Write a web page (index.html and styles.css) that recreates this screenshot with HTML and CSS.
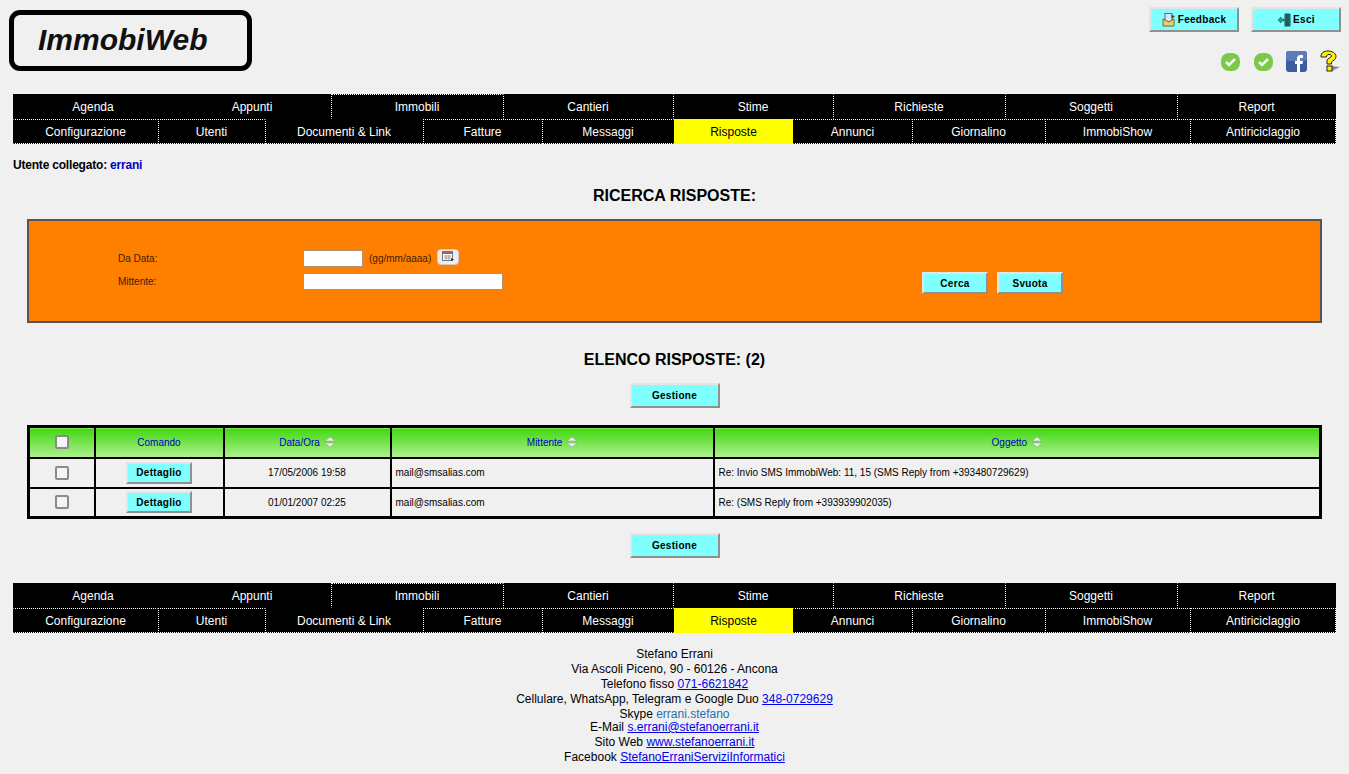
FILE: index.html
```html
<!DOCTYPE html>
<html lang="it">
<head>
<meta charset="utf-8">
<title>ImmobiWeb</title>
<link rel="stylesheet" href="styles.css">
</head>
<body>
<header class="top">
  <div class="logo"><span>ImmobiWeb</span></div>
  <div class="tools">
    <div class="tool-buttons">
      <a class="btn btn-tool btn-fb"><svg width="14" height="14" viewBox="0 0 14 14"><rect x="3" y="0.5" width="7" height="8" fill="#dfe6f2" stroke="#5a6a80"/><path d="M9 2l4 1-3 3z" fill="#444"/><path d="M1 6l6 3 5-3v7H1z" fill="#e8cf70" stroke="#7a6420"/></svg>Feedback</a>
      <a class="btn btn-tool btn-esci"><svg width="14" height="14" viewBox="0 0 14 14"><path d="M8 1h5v12H8z" fill="#2f8f8a" stroke="#17494a"/><path d="M9 2l3-1v12l-3-1z" fill="#1c5f60"/><path d="M1 7l3-3v2h3v2H4v2z" fill="#2aa6a0" stroke="#17494a" stroke-width=".6"/></svg>Esci</a>
    </div>
    <div class="tool-icons">
      <svg class="ico" width="21" height="21" viewBox="0 0 21 21"><rect x="1" y="2" width="19" height="18" rx="8" fill="#7bc84a"/><path d="M6 11l3 3 6-6" fill="none" stroke="#f4f8ee" stroke-width="2.6"/></svg>
      <svg class="ico" width="21" height="21" viewBox="0 0 21 21"><rect x="1" y="2" width="19" height="18" rx="8" fill="#7bc84a"/><path d="M6 11l3 3 6-6" fill="none" stroke="#f4f8ee" stroke-width="2.6"/></svg>
      <svg class="ico" width="21" height="21" viewBox="0 0 21 21"><rect x="0" y="0" width="21" height="21" rx="3" fill="#3b5c9f"/><rect x="0" y="0" width="21" height="10" rx="3" fill="#5a7ab8"/><path d="M11 21v-8H9v-3h2V7.5C11 5 12.500 4 14.500 4H17v3h-1.800c-.8 0-1.200.4-1.200 1.200V10h3l-.5 3H14v8z" fill="#fff"/></svg>
      <svg class="ico" width="22" height="22" viewBox="0 0 22 22"><path d="M12 16l9 1-8 4z" fill="#8a8a8a"/><path d="M2 6c0-3 3-5 7-5s8 2 8 5.500c0 3-3 4-4.500 5.500v2H8v-3.500c0-2 4.500-3 4.500-4.500 0-1-1-1.500-2.500-1.500S7.500 5 7.500 7H2z" fill="#ffec00" stroke="#222" stroke-width="1"/><rect x="8" y="16" width="5" height="5" fill="#ffec00" stroke="#222"/></svg>
    </div>
  </div>
</header>

<nav class="menu">
  <div class="menu-row row-a">
    <a class="mi">Agenda</a><a class="mi">Appunti</a><a class="mi dot-l dot-t">Immobili</a><a class="mi dot-l">Cantieri</a><a class="mi dot-l">Stime</a><a class="mi dot-l">Richieste</a><a class="mi dot-l">Soggetti</a><a class="mi dot-l">Report</a>
  </div>
  <div class="menu-row row-b">
    <a class="mi dot-t dot-b dot-l0">Configurazione</a><a class="mi dot-t dot-b dot-l">Utenti</a><a class="mi dot-l dot-b">Documenti &amp; Link</a><a class="mi dot-t dot-b dot-l">Fatture</a><a class="mi dot-t dot-b dot-l">Messaggi</a><a class="mi active">Risposte</a><a class="mi dot-t dot-b">Annunci</a><a class="mi dot-t dot-b dot-l">Giornalino</a><a class="mi dot-t dot-b dot-l">ImmobiShow</a><a class="mi dot-t dot-b dot-l dot-r">Antiriciclaggio</a>
  </div>
</nav>

<main class="content">
  <p class="user">Utente collegato: <span class="user-name">errani</span></p>
  <h2 class="title title-search">RICERCA RISPOSTE:</h2>

  <form class="search">
    <div class="fields">
      <div class="field">
        <label class="lbl">Da Data:</label>
        <input class="in in-date" type="text">
        <span class="hint">(gg/mm/aaaa)</span>
        <span class="cal"><svg width="12" height="11" viewBox="0 0 12 11"><rect x=".5" y=".5" width="10" height="9" fill="#fff" stroke="#777"/><rect x="1" y="1" width="9" height="2" fill="#b45a5a"/><path d="M2 5h7M2 7h7M4 4v5M7 4v5" stroke="#888" stroke-width=".7"/><path d="M9 7l3 1.500L9 10z" fill="#333"/></svg></span>
      </div>
      <div class="field">
        <label class="lbl">Mittente:</label>
        <input class="in in-sender" type="text">
      </div>
    </div>
    <div class="search-actions">
      <a class="btn btn-search">Cerca</a>
      <a class="btn btn-search">Svuota</a>
    </div>
  </form>

  <h2 class="title title-list">ELENCO RISPOSTE: (2)</h2>
  <div class="center"><a class="btn btn-manage">Gestione</a></div>

  <table class="grid">
    <colgroup><col class="c1"><col class="c2"><col class="c3"><col class="c4"><col></colgroup>
    <thead>
      <tr>
        <th><span class="chk"></span></th>
        <th>Comando</th>
        <th>Data/Ora <svg class="sort" width="10" height="10" viewBox="0 0 10 10"><path d="M5 0l5 4H0zM5 10l5-4H0z" fill="#eef2ee" stroke="#8a9a8a" stroke-width=".5"/></svg></th>
        <th>Mittente <svg class="sort" width="10" height="10" viewBox="0 0 10 10"><path d="M5 0l5 4H0zM5 10l5-4H0z" fill="#eef2ee" stroke="#8a9a8a" stroke-width=".5"/></svg></th>
        <th>Oggetto <svg class="sort" width="10" height="10" viewBox="0 0 10 10"><path d="M5 0l5 4H0zM5 10l5-4H0z" fill="#eef2ee" stroke="#8a9a8a" stroke-width=".5"/></svg></th>
      </tr>
    </thead>
    <tbody>
      <tr>
        <td class="ctr"><span class="chk"></span></td>
        <td class="ctr"><a class="btn btn-row">Dettaglio</a></td>
        <td class="ctr">17/05/2006 19:58</td>
        <td>mail@smsalias.com</td>
        <td>Re: Invio SMS ImmobiWeb: 11, 15 (SMS Reply from +393480729629)</td>
      </tr>
      <tr>
        <td class="ctr"><span class="chk"></span></td>
        <td class="ctr"><a class="btn btn-row">Dettaglio</a></td>
        <td class="ctr">01/01/2007 02:25</td>
        <td>mail@smsalias.com</td>
        <td>Re: (SMS Reply from +393939902035)</td>
      </tr>
    </tbody>
  </table>

  <div class="center center-bottom"><a class="btn btn-manage">Gestione</a></div>
</main>

<nav class="menu menu-bottom">
  <div class="menu-row row-a">
    <a class="mi">Agenda</a><a class="mi">Appunti</a><a class="mi dot-l dot-t">Immobili</a><a class="mi dot-l">Cantieri</a><a class="mi dot-l">Stime</a><a class="mi dot-l">Richieste</a><a class="mi dot-l">Soggetti</a><a class="mi dot-l">Report</a>
  </div>
  <div class="menu-row row-b">
    <a class="mi dot-t dot-b dot-l0">Configurazione</a><a class="mi dot-t dot-b dot-l">Utenti</a><a class="mi dot-l dot-b">Documenti &amp; Link</a><a class="mi dot-t dot-b dot-l">Fatture</a><a class="mi dot-t dot-b dot-l">Messaggi</a><a class="mi active">Risposte</a><a class="mi dot-t dot-b">Annunci</a><a class="mi dot-t dot-b dot-l">Giornalino</a><a class="mi dot-t dot-b dot-l">ImmobiShow</a><a class="mi dot-t dot-b dot-l dot-r">Antiriciclaggio</a>
  </div>
</nav>

<footer class="foot">
  <div>Stefano Errani</div>
  <div>Via Ascoli Piceno, 90 - 60126 - Ancona</div>
  <div>Telefono fisso <a href="#">071-6621842</a></div>
  <div>Cellulare, WhatsApp, Telegram e Google Duo <a href="#">348-0729629</a></div>
  <div class="skype">Skype <span class="skype-id">errani.stefano</span></div>
  <div>E-Mail <a href="#">s.errani@stefanoerrani.it</a></div>
  <div>Sito Web <a href="#">www.stefanoerrani.it</a></div>
  <div>Facebook <a href="#">StefanoErraniServiziInformatici</a></div>
</footer>
</body>
</html>
```

FILE: styles.css
```css
* { box-sizing: border-box; }
html, body { margin: 0; padding: 0; }
body {
  background: #f0f0f0;
  color: #000;
  font-family: "Liberation Sans", Arial, sans-serif;
  font-size: 12px;
  height: 774px;
  overflow: hidden;
}

/* header */
.top {
  display: flex;
  justify-content: space-between;
  height: 94px;
  padding: 10px 8px 0 9px;
}
.logo {
  width: 243px;
  height: 61px;
  border: 5px solid #000;
  border-radius: 11px;
  background: #f0f0f0;
  padding: 10px 0 0 24px;
}
.logo span {
  font-size: 30px;
  font-weight: bold;
  font-style: italic;
  line-height: 30px;
  color: #111;
}
.tools {
  display: flex;
  flex-direction: column;
  align-items: flex-end;
}
.tool-buttons { display: flex; gap: 12px; margin-top: -3px; }
.tool-icons {
  display: flex;
  gap: 12px;
  align-items: center;
  margin-top: 18px;
  padding-right: 0;
}

/* buttons */
.btn {
  display: inline-flex;
  align-items: center;
  justify-content: center;
  background: #80ffff;
  color: #000;
  font-weight: bold;
  font-size: 10px;
  letter-spacing: 0.3px;
  border: 2px solid;
  border-color: #e4e4e4 #909090 #909090 #e4e4e4;
}
.btn-tool { width: 90px; height: 25px; gap: 2px; }
.btn-search { width: 66px; height: 22px; }
.btn-manage { width: 90px; height: 25px; }
.btn-row { width: 66px; height: 22px; }

/* menu */
.menu { margin: 0 13px; }
.menu-row { display: grid; height: 25px; background: #000; }
.row-a { grid-template-columns: 160px 158px 172px 170px 160px 172px 172px 159px; }
.row-b { grid-template-columns: 145px 107px 158px 119px 132px 119px 119px 133px 145px 146px; }
.mi {
  display: flex;
  align-items: center;
  justify-content: center;
  color: #fff;
  font-size: 12px;
  border: 1px solid transparent;
}
.dot-l { border-left: 1px dotted #fff; }
.dot-t { border-top: 1px dotted #fff; }
.dot-b { border-bottom: 1px dotted #fff; }
.dot-r { border-right: 1px dotted #fff; }
.active { background: #ff0; color: #000; }
.menu-bottom { margin-top: 25px; }

/* content */
.content { padding: 0 27px; }
.user {
  margin: 14px 0 0 -14px;
  font-size: 12px;
  line-height: 14px;
  font-weight: bold;
  letter-spacing: -0.2px;
}
.user-name { color: #0000c0; }
.title {
  margin: 0;
  font-size: 16px;
  line-height: 18px;
  font-weight: bold;
  text-align: center;
}
.title-search { margin-top: 15px; }
.title-list { margin-top: 28px; }

.search {
  display: flex;
  height: 104px;
  margin-top: 14px;
  background: #ff8000;
  border: 2px solid #555;
  padding: 27px 0 0 89px;
}
.fields { width: 804px; flex: none; }
.field { display: flex; align-items: center; height: 20px; margin-bottom: 3px; }
.lbl { width: 185px; font-size: 10px; color: #402000; }
.in {
  height: 17px;
  background: #fff;
  border: 1px solid #b09070;
  padding: 0;
}
.in-date { width: 60px; }
.in-sender { width: 200px; }
.hint { font-size: 10px; margin-left: 6px; color: #402000; }
.cal {
  display: inline-flex;
  align-items: center;
  justify-content: center;
  width: 22px;
  height: 16px;
  margin-left: 6px;
  margin-top: -3px;
  background: #eee;
  border: 1px solid #ccc;
  border-radius: 4px;
}
.search-actions { display: flex; gap: 9px; margin-top: 24px; }

.center { display: flex; justify-content: center; margin-top: 14px; }
.center-bottom { margin-top: 14px; }

/* table */
.grid {
  width: 1295px;
  height: 94px;
  margin-top: 17px;
  border-collapse: collapse;
  border: 3px solid #000;
  table-layout: fixed;
  font-size: 10px;
}
.c1 { width: 66px; }
.c2 { width: 129px; }
.c3 { width: 167px; }
.c4 { width: 323px; }
.grid th, .grid td { border: 2px solid #000; padding: 0 4px; }
.grid th {
  height: 31px;
  font-weight: normal;
  color: #0000c0;
  background: linear-gradient(#40d810, #b0f090);
  text-align: center;
}
.grid td { height: 30px; }
.ctr { text-align: center; }
.chk {
  display: inline-block;
  width: 14px;
  height: 14px;
  background: #f4f4f4;
  border: 2px solid #8a8a8a;
  border-radius: 2px;
  vertical-align: middle;
}
.sort { vertical-align: -1px; margin-left: 2px; }

/* footer */
.foot { margin-top: 14px; text-align: center; line-height: 15px; font-size: 12px; }
.foot a { color: #0000ee; text-decoration: underline; }
.skype { height: 13px; overflow: hidden; }
.skype-id { color: #2a6db0; }
```
